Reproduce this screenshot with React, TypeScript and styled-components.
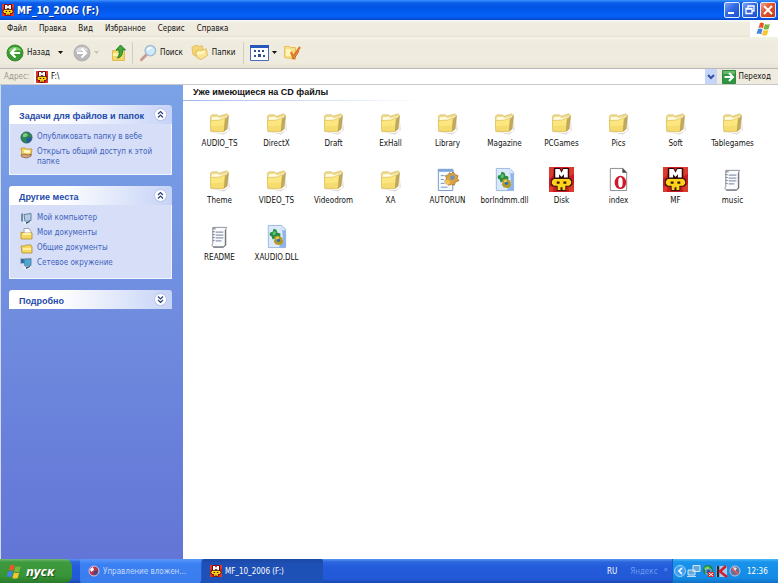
import React from "react";
import styled, { createGlobalStyle } from "styled-components";

const GlobalStyle = createGlobalStyle`
  * { box-sizing: border-box; }
  body { margin: 0; background: #fff; }
  body, button, input { font-family: "DejaVu Sans Condensed", "DejaVu Sans", sans-serif; font-size: 8px; }
  button { border: 0; padding: 0; background: none; color: inherit; cursor: pointer; }
  ul { list-style: none; margin: 0; padding: 0; }
  svg { display: block; flex: none; }
`;

const Window = styled.div`
  display: flex;
  flex-direction: column;
  min-height: 100vh;
  background: #efebde;
  color: #111;
`;

const TitleBar = styled.header`
  display: flex;
  align-items: center;
  gap: 3px;
  height: 20px;
  padding: 0 2px;
  background: linear-gradient(#3a93ff 0, #0a5be8 3px, #0055e5 8px, #0562fb 16px, #0548cc 20px);
  color: #fff;
`;

const Title = styled.h1`
  flex: 1;
  margin: 0;
  font: bold 10px "DejaVu Sans Condensed", "DejaVu Sans", sans-serif;
  text-shadow: 1px 1px 0 #0a318f;
`;

const CaptionButtons = styled.div`
  display: flex;
  gap: 2px;
`;

const CaptionButton = styled.button<{ $close?: boolean }>`
  width: 16px;
  height: 16px;
  border: 1px solid #dfe8ff;
  border-radius: 2px;
  background: ${(p) =>
    p.$close
      ? "linear-gradient(135deg, #f0a088, #e0522c 45%, #c83c14)"
      : "linear-gradient(135deg, #7ba6f8, #3369e4 45%, #1f50cc)"};
`;

const MenuRow = styled.div`
  display: flex;
  height: 17px;
  background: linear-gradient(#fafafa, #f0ece0 3px, #f0ece0 15px, #e6e0cc);
`;

const MenuBar = styled.nav`
  display: flex;
  flex: 1;
  align-items: center;
  gap: 12px;
  padding-left: 7px;
`;

const MenuItem = styled.button`
  line-height: 12px;
`;

const Brand = styled.div`
  display: flex;
  align-items: center;
  justify-content: center;
  width: 28px;
  background: #fff;
`;

const Toolbar = styled.div`
  display: flex;
  align-items: center;
  height: 31px;
  padding: 0 6px;
  background: linear-gradient(#f4f1e6, #efecdf 5px, #efecdf 25px, #e6e2d4);
`;

const ToolButton = styled.button<{ $after?: number }>`
  display: flex;
  align-items: center;
  gap: 3px;
  height: 24px;
  margin-right: ${(p) => p.$after ?? 0}px;
`;

const Separator = styled.span`
  width: 1px;
  height: 22px;
  margin-right: 6px;
  background: #d2cebf;
`;

const AddressBar = styled.form`
  display: flex;
  align-items: center;
  height: 17px;
  padding: 0 7px 0 4px;
  border-top: 1px solid #b9b9bb;
  border-bottom: 1px solid #c8c8c8;
`;

const AddressLabel = styled.label`
  width: 30px;
  color: #9b988c;
`;

const AddressField = styled.div`
  display: flex;
  flex: 1;
  align-items: center;
  gap: 3px;
  height: 15px;
  padding-left: 2px;
  background: #fff;
`;

const AddressInput = styled.input`
  flex: 1;
  min-width: 0;
  height: 13px;
  border: 0;
  padding: 0;
  outline: 0;
`;

const AddressDrop = styled.button`
  display: flex;
  align-items: center;
  justify-content: center;
  width: 12px;
  height: 15px;
  background: #c6d6fb;
`;

const GoButton = styled.button`
  display: flex;
  align-items: center;
  gap: 3px;
  margin-left: 5px;
`;

const Content = styled.div`
  display: flex;
  flex: 1;
`;

const Sidebar = styled.aside`
  display: flex;
  flex-direction: column;
  gap: 11px;
  width: 183px;
  padding: 20px 11px 12px 8px;
  border-left: 1px solid #cfdaf5;
  background: linear-gradient(#7ba2e7, #6375d6);
`;

const Panel = styled.section`
  color: #4262c0;
`;

const PanelHead = styled.header`
  display: flex;
  align-items: center;
  justify-content: space-between;
  height: 19px;
  padding: 0 5px 0 10px;
  border-radius: 3px 3px 0 0;
  background: linear-gradient(90deg, #fff 30%, #c6d3f7);
`;

const PanelTitle = styled.h2`
  margin: 0;
  padding-top: 2px;
  color: #1f4bab;
  font: bold 9px "Liberation Sans", Arial, sans-serif;
  white-space: nowrap;
`;

const PanelList = styled.ul`
  padding: 6px 9px 7px 10px;
  border: 1px solid #f1f4fd;
  border-top: 0;
  background: #d6dff7;
`;

const PanelItem = styled.li`
  min-height: 15px;
`;

const PanelLink = styled.a`
  display: flex;
  gap: 4px;
  padding-top: 2px;
  color: inherit;
  line-height: 10px;
  text-decoration: none;
  svg { margin-top: -1px; }
`;

const Main = styled.main`
  flex: 1;
  background: #fff;
`;

const GroupTitle = styled.h2`
  margin: 0;
  padding: 0 0 0 10px;
  font: bold 9px/15px "Liberation Sans", Arial, sans-serif;
  border-bottom: 1px solid;
  border-image: linear-gradient(90deg, #9fb9ee, #fff 240px) 1;
`;

const FileGrid = styled.ul`
  display: grid;
  grid-template-columns: repeat(auto-fill, 57px);
  grid-auto-rows: 57px;
  padding: 9px 0 0 8px;
`;

const FileButton = styled.button`
  display: flex;
  flex-direction: column;
  align-items: center;
  gap: 3px;
  width: 100%;
  line-height: 12px;
  white-space: nowrap;
`;

const Taskbar = styled.footer`
  display: flex;
  height: 24px;
  background: linear-gradient(#5a93f4 0, #2a66dc 3px, #245bdb 8px, #2259d5 20px, #1c48b0);
  color: #fff;
`;

const StartButton = styled.button`
  display: flex;
  align-items: center;
  gap: 3px;
  width: 72px;
  margin-right: 8px;
  padding-left: 6px;
  border-radius: 0 7px 7px 0;
  background: linear-gradient(#72b870 0, #3f9a3f 3px, #379437 17px, #2a7a2a);
  font: italic bold 13px "Open Sans", "Noto Sans", sans-serif;
  text-shadow: 1px 1px 1px #1c4f1c;
`;

const TaskButton = styled.button<{ $active?: boolean }>`
  display: flex;
  align-items: center;
  gap: 3px;
  width: 121px;
  margin-right: 1px;
  padding-left: 8px;
  border-radius: 2px;
  white-space: nowrap;
  color: ${(p) => (p.$active ? "#fff" : "#c5dafc")};
  background: ${(p) =>
    p.$active
      ? "linear-gradient(#1b48a4, #1e50b6 5px, #1e52b7)"
      : "linear-gradient(#5a98fa, #3b80f2 5px, #3a7cec)"};
`;

const TaskSpace = styled.div`
  display: flex;
  flex: 1;
  align-items: center;
  justify-content: flex-end;
  gap: 13px;
  padding-right: 4px;
`;

const Dimmed = styled.span`
  display: flex;
  gap: 6px;
  color: #6d9bf0;
`;

const More = styled.span`
  line-height: 5px;
`;

const Tray = styled.div`
  display: flex;
  align-items: center;
  gap: 1px;
  width: 106px;
  padding-left: 1px;
  border-left: 1px solid #1c5cc0;
  background: linear-gradient(#4cb8f6 0, #1993ec 3px, #148be6 19px, #1070c4);
`;

const Clock = styled.time`
  margin-left: 3px;
`;

const MfIcon = ({ size = 25 }: { size?: number }) => (
  <svg width={size} height={size} viewBox="0 0 26 26">
    <path fill="#cb1a22" d="M0 0h26v26H0z" />
    <path fill="#ef5a3a" opacity=".5" d="M0 0h6L4 9 0 12zM20 0h6v7l-5 3zM0 26v-5l5-2-1 7zM26 26h-5l-1-6 6-2z" />
    <path fill="#2a0606" d="M5 1h6.500L13 4l1.500-3H21v12H5z" />
    <path fill="#fff" d="M6.500 11V2H11l2 4 2-4h4.500v9h-4V7.500L13 10.500l-2.500-3V11z" />
    <path fill="#3a1505" d="M4 11.500h18l2 2v5l-2 2h-4V25H8v-4.500H4l-2-2v-5z" />
    <path fill="#ffd21c" d="M5 12.500h16l2 2v3l-2 2h-4V24h-3v-3h-2v3H9v-4.500H5l-2-2v-3z" />
    <path fill="#3a1505" d="M8 15h3v2.500H8zM15 15h3v2.500h-3z" />
  </svg>
);

const FolderIcon = () => (
  <svg width="25" height="25" viewBox="0 0 26 26">
    <path fill="#a29d8c" opacity=".5" d="m5 22.500 12 2 5.500-3V8l1 13-6 4.500z" />
    <path fill="#eedb8a" stroke="#d6bd70" strokeWidth=".7" d="M3.500 6.500 5 5h6l1.500 1.500 8-2.500 2 1.500-1.500 14-4 3H4z" />
    <path fill="#fffbe0" d="m5 7.500 6.500-.5 1.500 1.500 8-2-1 3-12 2.500-3-.5z" />
    <path fill="#fbe680" stroke="#dcbe58" strokeWidth=".7" d="M3.500 11 13 10.500l6-2.500-1.500 14.500L4 21.500z" />
    <path fill="#f4d768" d="m4 17 14-1-.5 6L4 21z" opacity=".7" />
    <path fill="#a08843" d="m17.500 22.500 1.500-14 3.500-2.500L21 20z" opacity=".6" />
  </svg>
);

const TextIcon = () => (
  <svg width="25" height="25" viewBox="0 0 26 26">
    <path fill="#fafbfc" stroke="#8a8f98" d="M6 3.500h14.500l-1.500 3V22l-2 2H6.500L5 22 6 20z" />
    <path stroke="#70757d" fill="none" d="M6 5h3M6 8h2M6 11h2M6 14h2M6 17h2" />
    <path stroke="#8d98b4" strokeWidth="1.300" d="M9 8.500h8M9 11.500h8M9 14.500h8M9 17.500h6" />
    <path stroke="#5c6067" d="M6.500 24H17l2.500-2V6" fill="none" />
  </svg>
);

const DllIcon = () => (
  <svg width="25" height="25" viewBox="0 0 26 26">
    <path fill="#dce9fc" stroke="#9bb8e2" d="M4.500 1.500h14l4 4v19h-18z" />
    <path fill="#8fb4ea" d="M18.500 1.500v5h4v18H15l5-6z" />
    <path fill="#268b43" d="m6 9 3-1 1-3 3 1 1 3 3 1v3l-3 3-3-1-2 1-1-3-2-1z" />
    <path fill="#55c268" d="m9 9 2-2 2 2-2 3-2-1z" />
    <path fill="#b39a23" d="m11 13 4-1 1 1 3 1 1 5-3 3-5-1-2-3 1-2z" />
    <circle cx="15" cy="17" r="1.800" fill="#2d6fb6" />
    <path fill="#e6cf55" d="m12 14 3-1 1 2-3 1z" />
  </svg>
);

const AutorunIcon = () => (
  <svg width="25" height="25" viewBox="0 0 26 26">
    <path fill="#f8fbff" stroke="#7697c8" d="M3.500 2.500h15v22h-15z" />
    <path fill="#7da6dc" d="M3 2h16v3H3z" />
    <path stroke="#6f91bf" d="M6 9h4M6 13h3M6 17h4M6 21h7" />
    <path fill="#dca441" stroke="#98651b" strokeWidth=".7" d="m15 6 2 1 2-2 2 3 3 1-1 3 2 2-4 2-1 3-3-1-3 1-1-3-3-1 2-3-1-3 3-1z" />
    <circle cx="18" cy="11" r="2.500" fill="#6f93b8" />
    <path fill="#f0c35d" d="m11 13 4 1 1 3-3 2-3-2z" />
  </svg>
);

const OperaIcon = () => (
  <svg width="25" height="25" viewBox="0 0 26 26">
    <path fill="#fff" stroke="#8b8b8b" d="M4.500 1.500h13l4 4v19h-17z" />
    <path fill="#444" d="M17 1v5h5z" />
    <ellipse cx="15" cy="16" rx="6" ry="7" fill="#d3162b" />
    <ellipse cx="15" cy="16" rx="2.300" ry="5.300" fill="#fff" />
  </svg>
);

const ArrowBall = ({ forward }: { forward?: boolean }) => (
  <svg width="18" height="18" viewBox="0 0 18 18">
    <circle cx="9" cy="9" r="8" fill={forward ? "#b9b9b9" : "#389a31"} stroke={forward ? "#b0b0b0" : "#3a8a34"} />
    <path fill={forward ? "#dedede" : "#83cf69"} d="M2.500 7C4 1.500 14 1.500 15.500 7 11 4 7 10 2.500 7z" />
    <path
      transform={forward ? "rotate(180 9 9)" : undefined}
      fill="none" stroke="#fff" strokeWidth="2.200" d="M9.500 4.500 5 9l4.500 4.500M5.500 9H14"
    />
  </svg>
);

const Caret = ({ color = "#111" }: { color?: string }) => (
  <svg width="5" height="4" viewBox="0 0 5 4"><path fill={color} d="M0 0h5L2.500 3z" /></svg>
);

const UpIcon = () => (
  <svg width="17" height="18" viewBox="0 0 17 18">
    <path fill="#f3d769" stroke="#dfba55" d="M1.500 6.500h5l1 1h6v9h-12z" />
    <path fill="#fff1a6" d="M2 9h6v3H2z" />
    <path fill="#43a839" stroke="#257e23" d="m9.500 1 5 5h-3c0 5-1 7-5 8 2-3 2-5 1.500-8H5z" />
  </svg>
);

const SearchIcon = () => (
  <svg width="18" height="18" viewBox="0 0 19 19">
    <path stroke="#c99a92" strokeWidth="3" strokeLinecap="round" d="m2.500 16.500 5-5" />
    <circle cx="12" cy="7" r="5.500" fill="#cfeafa" stroke="#a3bccf" strokeWidth="1.500" />
    <path stroke="#fff" strokeWidth="1.500" fill="none" d="M9 6.500Q10 4 13 4" />
  </svg>
);

const FoldersIcon = () => (
  <svg width="18" height="17" viewBox="0 0 19 18">
    <path fill="#f3d676" stroke="#e2bd62" d="M1 3.500 6 1l2 1.500 4-.5 1 8-8 3-3-2z" />
    <path fill="#fae692" stroke="#e2b85a" d="m5 8 4-2 2 1 5-2 1.500 7-7 4.500L6 14z" />
    <path fill="#fff6bf" d="m6 9 9-2-1 3-7 2z" />
  </svg>
);

const ViewsIcon = () => (
  <svg width="19" height="16" viewBox="0 0 19 16">
    <path fill="#fff" stroke="#496cb9" d="M.5.500h18v15H.5z" />
    <path fill="#2857be" d="M0 0h19v3H0z" />
    <path fill="#314e94" d="M4 5h2v2H4zM8 5h2v2H8zM12 5h2v2h-2zM4 10h2v2H4zM8 9h3v3H8zM13 10h2v2h-2z" />
  </svg>
);

const EditFolderIcon = () => (
  <svg width="18" height="18" viewBox="0 0 18 18">
    <path fill="#f8df86" stroke="#e8bf60" d="M1.500 2.500h5l1 1h5v12l-11-2z" />
    <path fill="#fff4bd" d="M3 5h5v7H3z" />
    <path fill="none" stroke="#e27922" strokeWidth="2.200" d="m8 8 2 5 7-10" />
    <path stroke="#c05a20" d="m9 13 2 2 5-8" fill="none" />
  </svg>
);

const WindowsFlag = ({ size = 16 }: { size?: number }) => (
  <svg width={size} height={size} viewBox="0 0 16 16">
    <path fill="#e9582b" d="M4 2q2.500-1 4 .5L7 7.500Q5.500 6 2.500 7z" />
    <path fill="#79b83c" d="M9 3q2.500 1 5 0l-1.500 5q-2.500 1-5 0z" />
    <path fill="#4384df" d="M2 8q3-1 4.500.5l-1.300 5Q3.500 12 .5 13z" />
    <path fill="#f7c52d" d="M7.500 9q2.500 1 5 0L11 14q-2.500 1-5 0z" />
  </svg>
);

const GoIcon = () => (
  <svg width="14" height="14" viewBox="0 0 14 14">
    <path fill="#2c9740" stroke="#2f8a3c" d="M.5.500h13v13H.5z" />
    <path fill="#66ba68" d="M1 1h12v3H1z" />
    <path fill="none" stroke="#fff" strokeWidth="2" d="M2.500 7h8M7 3l4 4-4 4" />
  </svg>
);

const Chevron = ({ down }: { down?: boolean }) => (
  <svg width="13" height="13" viewBox="0 0 13 13">
    <circle cx="6.500" cy="6.500" r="6" fill="#fff" stroke="#b3c0e5" />
    <path
      transform={down ? "rotate(180 6.500 6.500)" : undefined}
      fill="none" stroke="#283f87" strokeWidth="1.200" d="m4 6 2.500-2.500L9 6M4 9.500 6.500 7 9 9.500"
    />
  </svg>
);

const GlobeIcon = () => (
  <svg width="13" height="13" viewBox="0 0 13 13">
    <circle cx="6.500" cy="6.500" r="5.500" fill="#2c8658" stroke="#28635a" />
    <path fill="#7fd07c" d="m3 3 3-1 2 2-2 2-3 0z" />
    <path fill="#275da0" d="m6 8 3-2 3 1-2 4-3 1z" />
  </svg>
);

const ShareIcon = () => (
  <svg width="13" height="13" viewBox="0 0 13 13">
    <path fill="#f5d25a" stroke="#b88832" strokeWidth=".7" d="M1 2h4l1 1h6l-1 7H2z" />
    <path fill="#fff5c5" d="M4 4h6v3H4z" />
    <path fill="#dca47c" stroke="#77593f" strokeWidth=".7" d="m1 9 3-1 4 1 3-1v2l-4 2-5-1z" />
  </svg>
);

const ComputerIcon = ({ network }: { network?: boolean }) => (
  <svg width="13" height="13" viewBox="0 0 13 13">
    {network && <path fill="#3168a9" stroke="#a7bdd2" d="M.5 1.500h7v5h-7z" />}
    <path fill={network ? "#47a9d5" : "#b6cbe3"} stroke="#62819f" d="m4 2.500 7-1v7l-6 1z" />
    <path fill="#e9eef5" d="m2 10 8-1 2 2-7 1.500z" />
    <path fill="#31557d" d="m6 10 4-1v1l-4 2z" />
    {!network && <path fill="#748ba4" d="m1 2 2-1v9l-2-1z" />}
  </svg>
);

const DocsIcon = ({ open }: { open?: boolean }) => (
  <svg width="13" height="13" viewBox="0 0 13 13">
    {open && <path fill="#fff" stroke="#9aa2ae" d="M4 1.500h5l2 3V8H4z" />}
    <path fill="#f6d85f" stroke="#b38b33" strokeWidth=".8" d={open ? "m1 5 3 1h8v6H1z" : "M1 4h4l1-1h5l1 2v6H2z"} />
    <path fill="#fff1a4" d="M3 6h8v2H3z" />
  </svg>
);

const RedBallIcon = () => (
  <svg width="12" height="12" viewBox="0 0 12 12">
    <circle cx="6" cy="6" r="5" fill="#bb3248" stroke="#c6cbe5" />
    <path fill="#fff" d="m2 4 3-2 1 3-3 2z" />
    <path fill="#3e4a85" d="m6 6 4-1-1 4-3 1z" />
  </svg>
);

const TrayIcons = () => (
  <svg width="69" height="14" viewBox="0 0 69 14">
    <circle cx="6" cy="7" r="5.500" fill="#409ff1" stroke="#9ed4fa" />
    <path fill="none" stroke="#fff" strokeWidth="1.700" d="m8 4-3 3 3 3" />
    <path fill="#62a8d8" stroke="#d3e7f5" d="M19 1.500h7v6h-7zM14 6h7v5h-7z" />
    <path stroke="#c2dded" d="M13 12.500h9" />
    <circle cx="34" cy="6" r="5" fill="#21843a" />
    <path fill="#66d363" d="m30 4 4-2 2 2-4 3z" />
    <path fill="#2b55b0" stroke="#b8d8f0" strokeWidth=".7" d="M32 5h5v5h-5z" />
    <path fill="#d72a31" d="M34 8h6v5h-6z" />
    <path stroke="#fff" d="m35 9 4 3m0-3-4 3" />
    <path fill="#dce7f0" opacity=".7" d="M42 2h11v11H42z" />
    <path fill="none" stroke="#252b32" strokeWidth="2.500" d="M44 2v11" />
    <path fill="none" stroke="#d51b27" strokeWidth="2.500" d="m52 2-6 5.500 7 5.500" />
    <circle cx="61" cy="7" r="5" fill="#676f93" stroke="#b9c9e5" />
    <path stroke="#da5966" strokeWidth="2" d="m58 4 6 6" />
    <path fill="#e4eaf4" d="m59 3 4 1-2 3z" />
  </svg>
);

const files: [string, React.ComponentType][] = [
  ...["AUDIO_TS", "DirectX", "Draft", "ExHall", "Library", "Magazine", "PCGames", "Pics", "Soft", "Tablegames", "Theme", "VIDEO_TS", "Videodrom", "XA"].map(
    (name): [string, React.ComponentType] => [name, FolderIcon],
  ),
  ["AUTORUN", AutorunIcon],
  ["borlndmm.dll", DllIcon],
  ["Disk", MfIcon],
  ["index", OperaIcon],
  ["MF", MfIcon],
  ["music", TextIcon],
  ["README", TextIcon],
  ["XAUDIO.DLL", DllIcon],
];

const menus = ["Файл", "Правка", "Вид", "Избранное", "Сервис", "Справка"];

const tasks: [string, React.ReactNode][] = [
  ["Опубликовать папку в вебе", <GlobeIcon />],
  ["Открыть общий доступ к этой папке", <ShareIcon />],
];

const places: [string, React.ReactNode][] = [
  ["Мой компьютер", <ComputerIcon />],
  ["Мои документы", <DocsIcon open />],
  ["Общие документы", <DocsIcon />],
  ["Сетевое окружение", <ComputerIcon network />],
];

function SidePanel({ title, items }: { title: string; items?: [string, React.ReactNode][] }) {
  return (
    <Panel>
      <PanelHead>
        <PanelTitle>{title}</PanelTitle>
        <button aria-label={title} aria-expanded={!!items}><Chevron down={!items} /></button>
      </PanelHead>
      {items && (
        <PanelList>
          {items.map(([label, icon]) => (
            <PanelItem key={label}>
              <PanelLink href="#">{icon}<span>{label}</span></PanelLink>
            </PanelItem>
          ))}
        </PanelList>
      )}
    </Panel>
  );
}

export default function App() {
  return (
    <Window>
      <GlobalStyle />
      <TitleBar>
        <MfIcon size={12} />
        <Title>MF_10_2006 (F:)</Title>
        <CaptionButtons>
          <CaptionButton aria-label="Свернуть">
            <svg width="14" height="14"><path fill="#fff" d="M3 9h6v2H3z" /></svg>
          </CaptionButton>
          <CaptionButton aria-label="Восстановить">
            <svg width="14" height="14"><path fill="none" stroke="#fff" strokeWidth="1.300" d="M5 5V3h6v5H9M3 5.500h6v5H3zM3 6h6M5 3h6" /></svg>
          </CaptionButton>
          <CaptionButton $close aria-label="Закрыть">
            <svg width="14" height="14"><path stroke="#fff" strokeWidth="2" d="m3 3 8 8m0-8-8 8" /></svg>
          </CaptionButton>
        </CaptionButtons>
      </TitleBar>
      <MenuRow>
        <MenuBar>
          {menus.map((m) => <MenuItem key={m}>{m}</MenuItem>)}
        </MenuBar>
        <Brand><WindowsFlag /></Brand>
      </MenuRow>
      <Toolbar>
        <ToolButton $after={8}><ArrowBall />Назад</ToolButton>
        <ToolButton $after={10} aria-label="Журнал"><Caret /></ToolButton>
        <ToolButton $after={12} aria-label="Вперед"><ArrowBall forward /><Caret color="#c5c2b6" /></ToolButton>
        <ToolButton $after={4} aria-label="Вверх"><UpIcon /></ToolButton>
        <Separator />
        <ToolButton $after={8}><SearchIcon />Поиск</ToolButton>
        <ToolButton $after={8}><FoldersIcon />Папки</ToolButton>
        <Separator />
        <ToolButton $after={6} aria-label="Вид"><ViewsIcon /><Caret /></ToolButton>
        <ToolButton aria-label="Изменить папку"><EditFolderIcon /></ToolButton>
      </Toolbar>
      <AddressBar onSubmit={(e) => e.preventDefault()}>
        <AddressLabel htmlFor="address">Адрес:</AddressLabel>
        <AddressField>
          <MfIcon size={12} />
          <AddressInput id="address" defaultValue="F:\" />
          <AddressDrop type="button" aria-label="Список адресов">
            <svg width="8" height="6"><path fill="none" stroke="#35549c" strokeWidth="2" d="m1 1 3 3 3-3" /></svg>
          </AddressDrop>
        </AddressField>
        <GoButton><GoIcon />Переход</GoButton>
      </AddressBar>
      <Content>
        <Sidebar>
          <SidePanel title="Задачи для файлов и папок" items={tasks} />
          <SidePanel title="Другие места" items={places} />
          <SidePanel title="Подробно" />
        </Sidebar>
        <Main>
          <GroupTitle>Уже имеющиеся на CD файлы</GroupTitle>
          <FileGrid>
            {files.map(([name, Icon]) => (
              <li key={name}><FileButton><Icon />{name}</FileButton></li>
            ))}
          </FileGrid>
        </Main>
      </Content>
      <Taskbar>
        <StartButton><WindowsFlag size={17} />пуск</StartButton>
        <TaskButton><RedBallIcon />Управление вложен...</TaskButton>
        <TaskButton $active><MfIcon size={12} />MF_10_2006 (F:)</TaskButton>
        <TaskSpace>
          <span>RU</span>
          <Dimmed>Яндекс<More>»</More></Dimmed>
        </TaskSpace>
        <Tray>
          <TrayIcons />
          <Clock>12:36</Clock>
        </Tray>
      </Taskbar>
    </Window>
  );
}
